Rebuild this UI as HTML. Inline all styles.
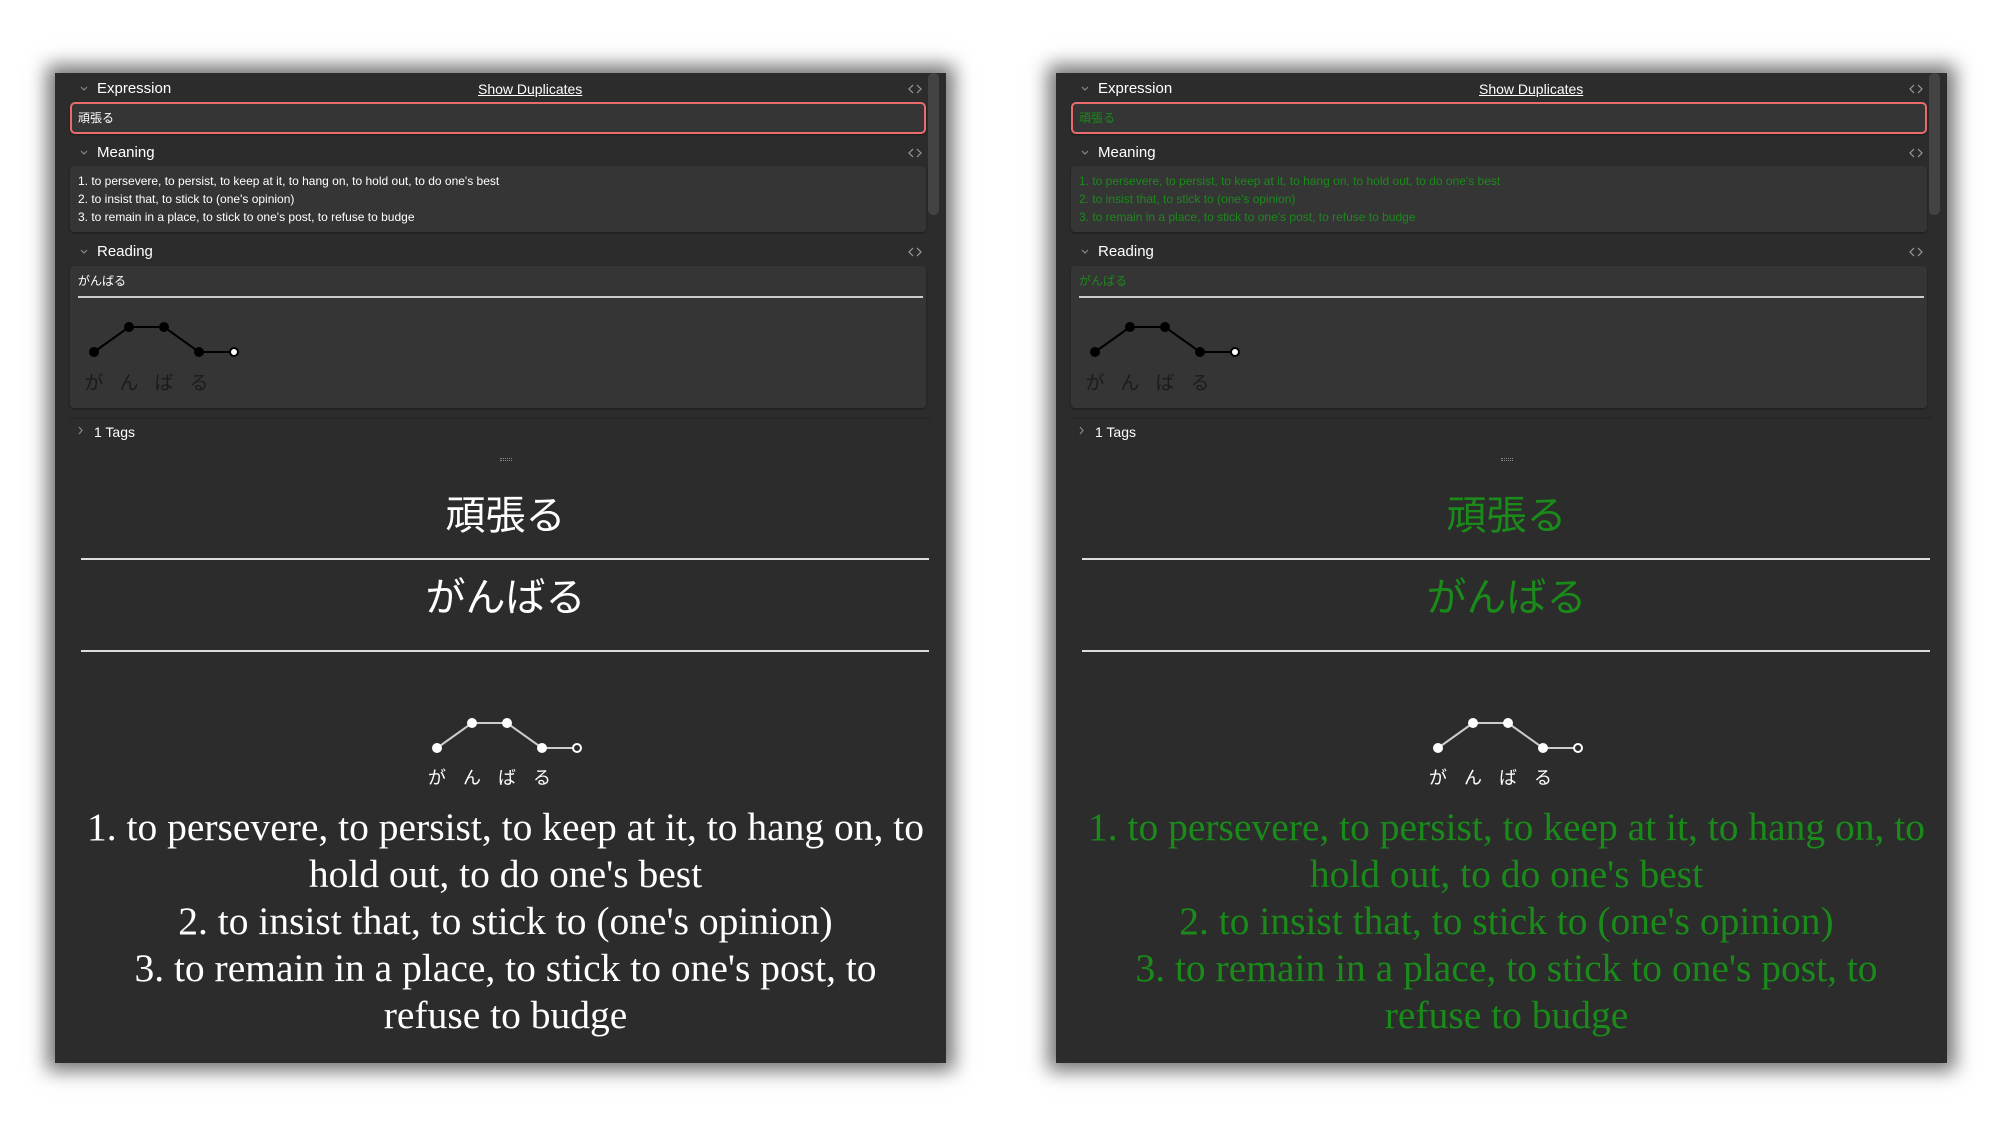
<!DOCTYPE html>
<html><head><meta charset="utf-8"><style>
*{margin:0;padding:0;box-sizing:border-box}
body{width:2000px;height:1136px;background:#fff;position:relative;overflow:hidden;font-family:"Liberation Sans","Noto Sans CJK JP",sans-serif}
.p{position:absolute;top:73px;width:891px;height:990px;background:#2c2c2c;box-shadow:0 0 18px 8px rgba(0,0,0,.55);overflow:hidden}
.a{position:absolute}
.lbl{color:#fff;font-size:15px;line-height:18px}
.box{position:absolute;left:15px;width:856px;background:#353535;border-radius:4px;box-shadow:0 1px 2px rgba(0,0,0,.4)}
.ft{font-size:12px;color:#fff}
.jp{font-family:"Liberation Sans","Noto Sans CJK JP",sans-serif}
.sb{position:absolute;left:873px;top:0;width:11px;height:142px;background:#434343;border-radius:5px}
.big{position:absolute;left:5px;width:891px;text-align:center;color:#fff;font-size:40px;font-family:"Noto Sans CJK JP",sans-serif}
.hr{position:absolute;left:26px;width:848px;height:2px;background:#ddd}
.ser{position:absolute;left:5px;top:731px;width:891px;text-align:center;font-family:"Liberation Serif",serif;font-size:39.5px;line-height:47px;color:#fff;white-space:nowrap}
.g .fg{color:#1a8a1a}
</style></head><body>

<!-- LEFT PANEL -->
<div class="p" style="left:55px">
 <div class="sb"></div>
 <svg class="a" style="left:24px;top:12px" width="10" height="8"><path d="M2 2 L5 5 L8 2" fill="none" stroke="#888" stroke-width="1.2"/></svg>
 <div class="a lbl" style="left:42px;top:7px">Expression</div>
 <div class="a lbl" style="left:423px;top:7px;font-size:14px;text-decoration:underline">Show Duplicates</div>
 <svg class="a" style="left:852px;top:10px" width="16" height="12"><path d="M6 2 L2 6 L6 10 M10 2 L14 6 L10 10" fill="none" stroke="#999" stroke-width="1.2"/></svg>
 <div class="box" style="top:29px;height:32px;border:2px solid #ea6b6b;border-radius:5px"></div>
 <div class="a ft jp" style="left:23px;top:36px">頑張る</div>

 <svg class="a" style="left:24px;top:76px" width="10" height="8"><path d="M2 2 L5 5 L8 2" fill="none" stroke="#888" stroke-width="1.2"/></svg>
 <div class="a lbl" style="left:42px;top:71px">Meaning</div>
 <svg class="a" style="left:852px;top:74px" width="16" height="12"><path d="M6 2 L2 6 L6 10 M10 2 L14 6 L10 10" fill="none" stroke="#999" stroke-width="1.2"/></svg>
 <div class="box" style="top:93px;height:66px"></div>
 <div class="a ft" style="left:23px;top:99px;line-height:18px">1. to persevere, to persist, to keep at it, to hang on, to hold out, to do one's best<br>2. to insist that, to stick to (one's opinion)<br>3. to remain in a place, to stick to one's post, to refuse to budge</div>

 <svg class="a" style="left:24px;top:175px" width="10" height="8"><path d="M2 2 L5 5 L8 2" fill="none" stroke="#888" stroke-width="1.2"/></svg>
 <div class="a lbl" style="left:42px;top:170px">Reading</div>
 <svg class="a" style="left:852px;top:173px" width="16" height="12"><path d="M6 2 L2 6 L6 10 M10 2 L14 6 L10 10" fill="none" stroke="#999" stroke-width="1.2"/></svg>
 <div class="box" style="top:193px;height:142px"></div>
 <div class="a ft jp" style="left:23px;top:199px">がんばる</div>
 <div class="a" style="left:23px;top:223px;width:845px;height:2px;background:#ccc"></div>
 <svg class="a" style="left:0;top:240px" width="260" height="130">
  <polyline points="39,39 74,14 109,14 144,39 179,39" fill="none" stroke="#000" stroke-width="2"/>
  <circle cx="39" cy="39" r="5" fill="#000"/><circle cx="74" cy="14" r="5" fill="#000"/><circle cx="109" cy="14" r="5" fill="#000"/><circle cx="144" cy="39" r="5" fill="#000"/><circle cx="179" cy="39" r="4" fill="#fff" stroke="#000" stroke-width="2"/>
  <g font-family="Noto Sans CJK JP" font-size="19" fill="#1b1b1b" text-anchor="middle"><text x="39" y="76">が</text><text x="74" y="76">ん</text><text x="109" y="76">ば</text><text x="144" y="76">る</text></g>
 </svg>

 <div class="a" style="left:15px;top:344px;width:860px;height:2px;background:#262626"></div>
 <svg class="a" style="left:22px;top:352px" width="8" height="12"><path d="M2 2 L5 5.5 L2 9" fill="none" stroke="#888" stroke-width="1.2"/></svg>
 <div class="a lbl" style="left:39px;top:350px;font-size:14px">1 Tags</div>
 <div class="a" style="left:445px;top:385px;width:12px;height:3px;border-top:1px dotted #888;border-bottom:1px dotted #888"></div>

 <div class="big" style="top:410px">頑張る</div>
 <div class="hr" style="top:485px"></div>
 <div class="big" style="top:492px">がんばる</div>
 <div class="hr" style="top:577px"></div>
 <svg class="a" style="left:362px;top:640px" width="240" height="150">
  <polyline points="20,35 55,10 90,10 125,35 160,35" fill="none" stroke="#ccc" stroke-width="2"/>
  <circle cx="20" cy="35" r="5" fill="#fff"/><circle cx="55" cy="10" r="5" fill="#fff"/><circle cx="90" cy="10" r="5" fill="#fff"/><circle cx="125" cy="35" r="5" fill="#fff"/><circle cx="160" cy="35" r="4" fill="#2c2c2c" stroke="#fff" stroke-width="2"/>
  <g font-family="Noto Sans CJK JP" font-size="18" fill="#fff" text-anchor="middle"><text x="20" y="71">が</text><text x="55" y="71">ん</text><text x="90" y="71">ば</text><text x="125" y="71">る</text></g>
 </svg>
 <div class="ser">1. to persevere, to persist, to keep at it, to hang on, to<br>hold out, to do one's best<br>2. to insist that, to stick to (one's opinion)<br>3. to remain in a place, to stick to one's post, to<br>refuse to budge</div>
</div>

<!-- RIGHT PANEL -->
<div class="p g" style="left:1056px">
 <div class="sb"></div>
 <svg class="a" style="left:24px;top:12px" width="10" height="8"><path d="M2 2 L5 5 L8 2" fill="none" stroke="#888" stroke-width="1.2"/></svg>
 <div class="a lbl" style="left:42px;top:7px">Expression</div>
 <div class="a lbl" style="left:423px;top:7px;font-size:14px;text-decoration:underline">Show Duplicates</div>
 <svg class="a" style="left:852px;top:10px" width="16" height="12"><path d="M6 2 L2 6 L6 10 M10 2 L14 6 L10 10" fill="none" stroke="#999" stroke-width="1.2"/></svg>
 <div class="box" style="top:29px;height:32px;border:2px solid #ea6b6b;border-radius:5px"></div>
 <div class="a ft jp fg" style="left:23px;top:36px">頑張る</div>

 <svg class="a" style="left:24px;top:76px" width="10" height="8"><path d="M2 2 L5 5 L8 2" fill="none" stroke="#888" stroke-width="1.2"/></svg>
 <div class="a lbl" style="left:42px;top:71px">Meaning</div>
 <svg class="a" style="left:852px;top:74px" width="16" height="12"><path d="M6 2 L2 6 L6 10 M10 2 L14 6 L10 10" fill="none" stroke="#999" stroke-width="1.2"/></svg>
 <div class="box" style="top:93px;height:66px"></div>
 <div class="a ft fg" style="left:23px;top:99px;line-height:18px">1. to persevere, to persist, to keep at it, to hang on, to hold out, to do one's best<br>2. to insist that, to stick to (one's opinion)<br>3. to remain in a place, to stick to one's post, to refuse to budge</div>

 <svg class="a" style="left:24px;top:175px" width="10" height="8"><path d="M2 2 L5 5 L8 2" fill="none" stroke="#888" stroke-width="1.2"/></svg>
 <div class="a lbl" style="left:42px;top:170px">Reading</div>
 <svg class="a" style="left:852px;top:173px" width="16" height="12"><path d="M6 2 L2 6 L6 10 M10 2 L14 6 L10 10" fill="none" stroke="#999" stroke-width="1.2"/></svg>
 <div class="box" style="top:193px;height:142px"></div>
 <div class="a ft jp fg" style="left:23px;top:199px">がんばる</div>
 <div class="a" style="left:23px;top:223px;width:845px;height:2px;background:#ccc"></div>
 <svg class="a" style="left:0;top:240px" width="260" height="130">
  <polyline points="39,39 74,14 109,14 144,39 179,39" fill="none" stroke="#000" stroke-width="2"/>
  <circle cx="39" cy="39" r="5" fill="#000"/><circle cx="74" cy="14" r="5" fill="#000"/><circle cx="109" cy="14" r="5" fill="#000"/><circle cx="144" cy="39" r="5" fill="#000"/><circle cx="179" cy="39" r="4" fill="#fff" stroke="#000" stroke-width="2"/>
  <g font-family="Noto Sans CJK JP" font-size="19" fill="#1b1b1b" text-anchor="middle"><text x="39" y="76">が</text><text x="74" y="76">ん</text><text x="109" y="76">ば</text><text x="144" y="76">る</text></g>
 </svg>

 <div class="a" style="left:15px;top:344px;width:860px;height:2px;background:#262626"></div>
 <svg class="a" style="left:22px;top:352px" width="8" height="12"><path d="M2 2 L5 5.5 L2 9" fill="none" stroke="#888" stroke-width="1.2"/></svg>
 <div class="a lbl" style="left:39px;top:350px;font-size:14px">1 Tags</div>
 <div class="a" style="left:445px;top:385px;width:12px;height:3px;border-top:1px dotted #888;border-bottom:1px dotted #888"></div>

 <div class="big fg" style="top:410px">頑張る</div>
 <div class="hr" style="top:485px"></div>
 <div class="big fg" style="top:492px">がんばる</div>
 <div class="hr" style="top:577px"></div>
 <svg class="a" style="left:362px;top:640px" width="240" height="150">
  <polyline points="20,35 55,10 90,10 125,35 160,35" fill="none" stroke="#ccc" stroke-width="2"/>
  <circle cx="20" cy="35" r="5" fill="#fff"/><circle cx="55" cy="10" r="5" fill="#fff"/><circle cx="90" cy="10" r="5" fill="#fff"/><circle cx="125" cy="35" r="5" fill="#fff"/><circle cx="160" cy="35" r="4" fill="#2c2c2c" stroke="#fff" stroke-width="2"/>
  <g font-family="Noto Sans CJK JP" font-size="18" fill="#fff" text-anchor="middle"><text x="20" y="71">が</text><text x="55" y="71">ん</text><text x="90" y="71">ば</text><text x="125" y="71">る</text></g>
 </svg>
 <div class="ser fg">1. to persevere, to persist, to keep at it, to hang on, to<br>hold out, to do one's best<br>2. to insist that, to stick to (one's opinion)<br>3. to remain in a place, to stick to one's post, to<br>refuse to budge</div>
</div>
</body></html>
